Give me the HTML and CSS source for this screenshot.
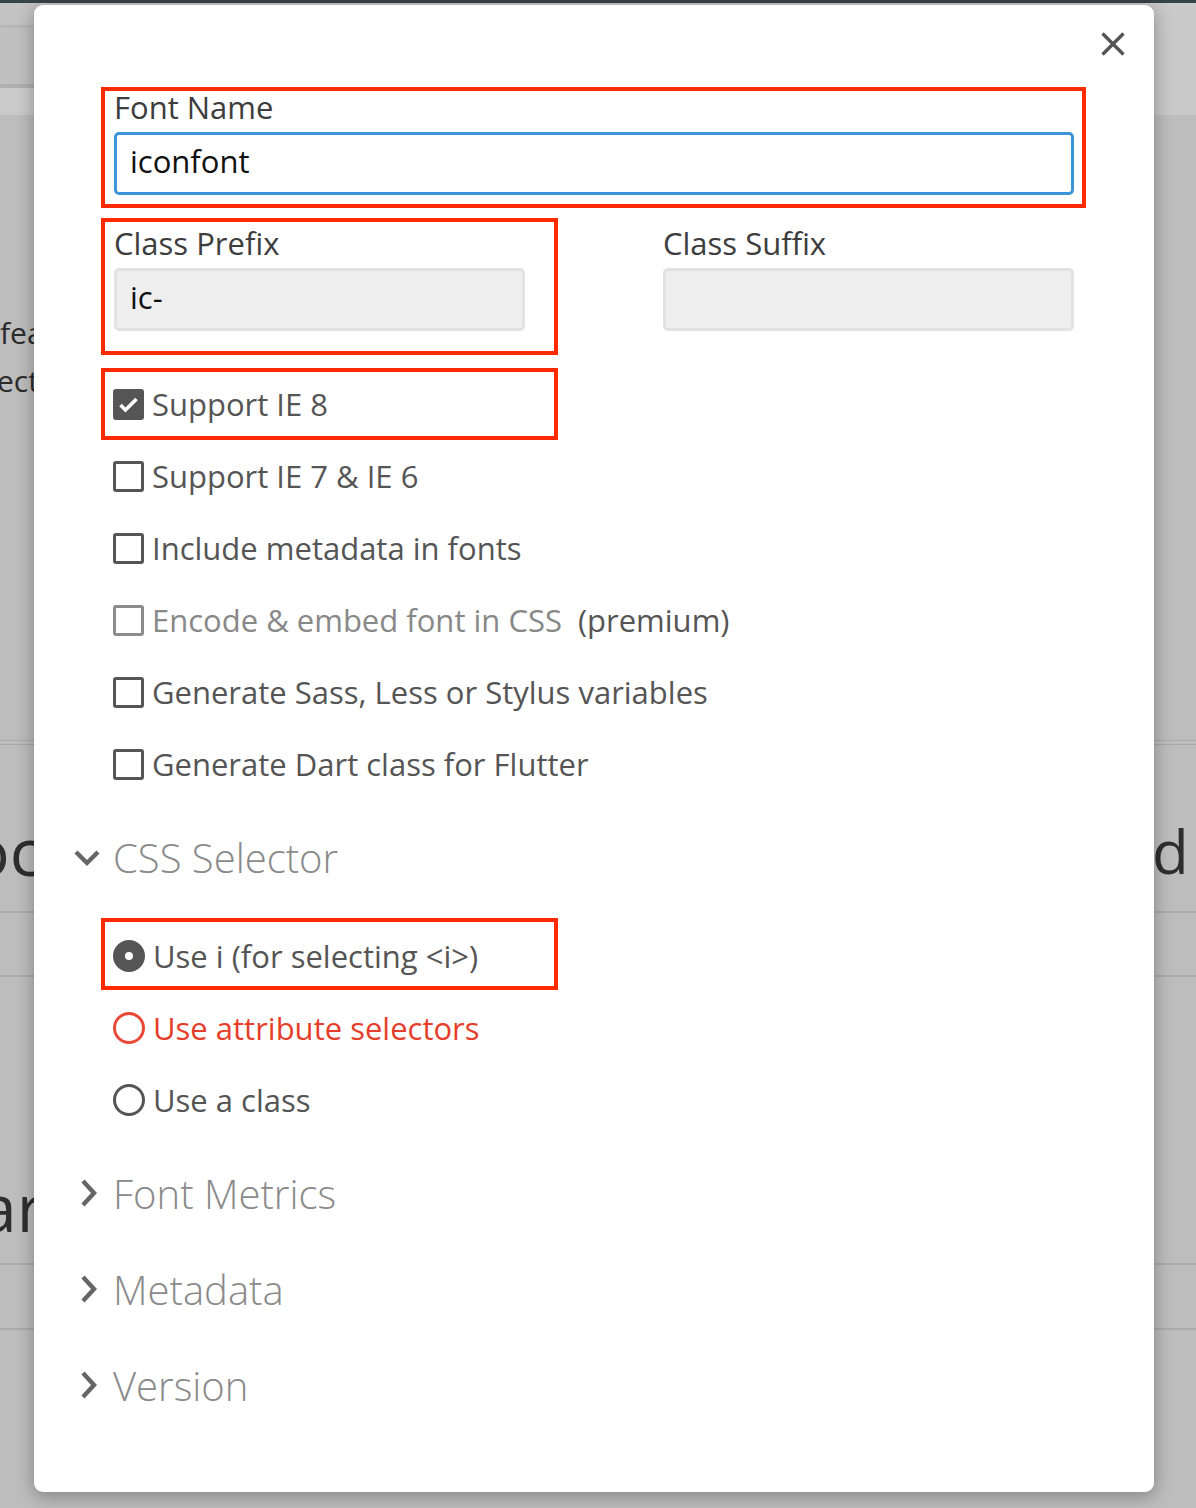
FILE: index.html
```html
<!DOCTYPE html>
<html lang="en">
<head>
<meta charset="utf-8">
<title>Font settings</title>
<link rel="stylesheet" href="styles.css">
</head>
<body>
<div class="page">
  <div class="topbar"></div>
  <div class="nav">
    <div class="nav-a"></div>
    <div class="nav-b"></div>
    <div class="nav-c"></div>
  </div>
  <div class="bg-intro">
    <p class="bg-text">features</p>
    <p class="bg-text bg-shift">ect</p>
  </div>
  <div class="bg-rule"></div>
  <div class="bg-rule thin"></div>
  <div class="bg-sec bg-sec-a">
    <span class="bg-big bg-left">oc</span>
    <span class="bg-big bg-right">d</span>
  </div>
  <div class="bg-sec bg-sec-b"></div>
  <div class="bg-sec bg-sec-c">
    <span class="bg-big bg-left">ar</span>
  </div>
  <div class="bg-sec bg-sec-d"></div>
  <div class="bg-sec bg-sec-e"></div>
</div>

<div class="modal">
  <button class="close" aria-label="Close">
    <svg width="24" height="24" viewBox="0 0 24 24"><path d="M1.5 1.5L22.5 22.5M22.5 1.5L1.5 22.5" stroke="#555" stroke-width="3.4" fill="none"/></svg>
  </button>

  <div class="field">
    <span class="mark mark-name"></span>
    <div class="label">Font Name</div>
    <div class="input input-active">iconfont</div>
  </div>

  <div class="class-row">
    <div class="field">
      <span class="mark mark-prefix"></span>
      <div class="label">Class Prefix</div>
      <div class="input input-muted">ic-</div>
    </div>
    <div class="field">
      <div class="label">Class Suffix</div>
      <div class="input input-muted"></div>
    </div>
  </div>

  <ul class="options options-first">
    <li class="opt"><span class="mark mark-row"></span><span class="box box-checked"><svg width="31" height="31" viewBox="0 0 31 31"><polyline points="7.5,16 12.5,21 23.5,10" fill="none" stroke="#fff" stroke-width="3.6"/></svg></span><span>Support IE 8</span></li>
    <li class="opt"><span class="box"></span><span>Support IE 7 &amp; IE 6</span></li>
    <li class="opt"><span class="box"></span><span>Include metadata in fonts</span></li>
    <li class="opt opt-disabled"><span class="box"></span><span>Encode &amp; embed font in CSS</span><span class="premium">(premium)</span></li>
    <li class="opt"><span class="box"></span><span>Generate Sass, Less or Stylus variables</span></li>
    <li class="opt"><span class="box"></span><span>Generate Dart class for Flutter</span></li>
  </ul>

  <section class="group">
    <h3 class="group-head"><svg class="chev" width="28" height="30" viewBox="0 0 28 30"><polyline points="3,10 14,21 25,10" fill="none" stroke="#666" stroke-width="4.4"/></svg><span>CSS Selector</span></h3>
    <ul class="options options-sel">
      <li class="opt"><span class="mark mark-row mark-radio"></span><span class="radio radio-on"></span><span>Use i (for selecting &lt;i&gt;)</span></li>
      <li class="opt opt-red"><span class="radio"></span><span>Use attribute selectors</span></li>
      <li class="opt"><span class="radio"></span><span>Use a class</span></li>
    </ul>
  </section>

  <section class="group group-closed">
    <h3 class="group-head"><svg class="chev" width="28" height="30" viewBox="0 0 28 30"><polyline points="10,3 21,15 10,27" fill="none" stroke="#666" stroke-width="4.4"/></svg><span>Font Metrics</span></h3>
  </section>
  <section class="group group-closed">
    <h3 class="group-head"><svg class="chev" width="28" height="30" viewBox="0 0 28 30"><polyline points="10,3 21,15 10,27" fill="none" stroke="#666" stroke-width="4.4"/></svg><span>Metadata</span></h3>
  </section>
  <section class="group group-closed">
    <h3 class="group-head"><svg class="chev" width="28" height="30" viewBox="0 0 28 30"><polyline points="10,3 21,15 10,27" fill="none" stroke="#666" stroke-width="4.4"/></svg><span>Version</span></h3>
  </section>
</div>
</body>
</html>
```

FILE: styles.css
```css
* { box-sizing: border-box; }

html, body {
  margin: 0;
  padding: 0;
}

body {
  width: 1196px;
  height: 1508px;
  overflow: hidden;
  position: relative;
  background: #bdbdbd;
  font-family: "Open Sans", "Noto Sans", sans-serif;
}

/* ---------- dimmed page behind the dialog ---------- */
.page {
  width: 1196px;
  height: 1508px;
  background: #bdbdbd;
}

.topbar {
  height: 3px;
  background: #37434a;
}

.nav {
  height: 112px;
  background: #c9c9c9;
}

.nav-a {
  width: 40px;
  height: 25px;
  background: #c3c3c3;
  border-bottom: 3px solid #b7b7b7;
}

.nav-b {
  width: 40px;
  height: 60px;
  background: #c0c0c0;
  border-bottom: 4px solid #b0b0b0;
}

.nav-c {
  width: 40px;
  height: 24px;
  background: #cbcbcb;
}

.bg-intro {
  height: 625px;
  padding-top: 194px;
}

.bg-text {
  margin: 0;
  font-size: 30px;
  line-height: 48px;
  color: #2b2b2b;
}

.bg-shift {
  margin-left: -3px;
}

.bg-rule {
  height: 5px;
  border-top: 1px solid #a8a8a8;
}

.bg-rule.thin {
  height: 1px;
  margin-top: -1px;
}

.bg-sec {
  position: relative;
  border-bottom: 2px solid #ababab;
}

.bg-sec-a { height: 168px; }
.bg-sec-b { height: 64px; }
.bg-sec-c { height: 288px; }
.bg-sec-d { height: 65px; }
.bg-sec-e { height: 0; border-bottom: 0; }

.bg-big {
  position: absolute;
  font-size: 66px;
  line-height: 1;
  color: #2e2e2e;
}

.bg-sec-a .bg-left { left: -30px; top: 72px; }
.bg-sec-a .bg-right { left: 1152px; top: 76px; font-size: 60px; }
.bg-sec-c .bg-left { left: -20px; top: 196px; }

/* ---------- dialog ---------- */
.modal {
  position: absolute;
  left: 34px;
  top: 5px;
  width: 1120px;
  height: 1487px;
  background: #fff;
  border-radius: 9px;
  box-shadow: 0 4px 18px rgba(0, 0, 0, 0.32);
  padding: 84px 80px 0 80px;
}

.close {
  position: absolute;
  top: 27px;
  right: 29px;
  width: 24px;
  height: 24px;
  padding: 0;
  border: 0;
  background: none;
  display: block;
}

.close svg { display: block; }

.field {
  position: relative;
}

.label {
  font-size: 31px;
  line-height: 36px;
  color: #3d3d3d;
  margin-bottom: 7px;
}

.input {
  height: 63px;
  border-radius: 5px;
  padding: 0 13px;
  font-size: 31px;
  line-height: 53px;
  color: #111;
}

.input-active {
  border: 3px solid #3c95d8;
  background: #fff;
}

.input-muted {
  border: 3px solid #e2e2e2;
  background: #eeeeee;
}

.class-row {
  margin-top: 30px;
  display: grid;
  grid-template-columns: 411px 411px;
  justify-content: space-between;
}

/* red annotation outlines */
.mark {
  position: absolute;
  border: 4px solid #ff2a00;
  pointer-events: none;
}

.mark-name {
  top: -2px;
  bottom: -13px;
  left: -13px;
  right: -12px;
}

.mark-prefix {
  top: -7px;
  bottom: -24px;
  left: -13px;
  right: -33px;
}

.mark-row {
  top: 0;
  bottom: 0;
  left: -13px;
  width: 457px;
}

.mark-radio {
  top: -2px;
  bottom: 2px;
}

/* option rows */
.options {
  list-style: none;
  margin: 0;
  padding: 0;
}

.options-first { margin-top: 37px; }
.options-sel { margin-top: 15px; }

.opt {
  position: relative;
  height: 72px;
  display: flex;
  align-items: center;
  gap: 8px;
  font-size: 31px;
  line-height: 40px;
  color: #555;
  white-space: nowrap;
}

.box {
  flex: none;
  width: 31px;
  height: 31px;
  margin-left: -1px;
  border: 3px solid #555;
  border-radius: 3px;
  position: relative;
}

.box-checked {
  background: #555;
}

.box-checked svg {
  position: absolute;
  left: -3px;
  top: -3px;
}

.opt-disabled { color: #888; }
.opt-disabled .box { border-color: #8c8c8c; }

.premium {
  color: #555;
  margin-left: 8px;
}

.radio {
  flex: none;
  width: 32px;
  height: 32px;
  margin-left: -1px;
  border: 3px solid #555;
  border-radius: 50%;
  position: relative;
}

.radio-on {
  background: #555;
}

.radio-on::after {
  content: "";
  position: absolute;
  left: 50%;
  top: 50%;
  width: 8px;
  height: 8px;
  margin: -4px 0 0 -4px;
  border-radius: 50%;
  background: #fff;
}

.opt-red { color: #e63e2b; }
.opt-red .radio { border-color: #e84a37; }

/* collapsible groups */
.group {
  margin-top: 9px;
}

.group-closed + .group-closed {
  margin-top: 0;
}

.group-head {
  margin: 0 0 0 -41px;
  height: 96px;
  display: flex;
  align-items: center;
  gap: 12px;
  font-size: 40px;
  font-weight: 300;
  color: #8a8a8a;
}

.chev {
  flex: none;
  display: block;
}
```
